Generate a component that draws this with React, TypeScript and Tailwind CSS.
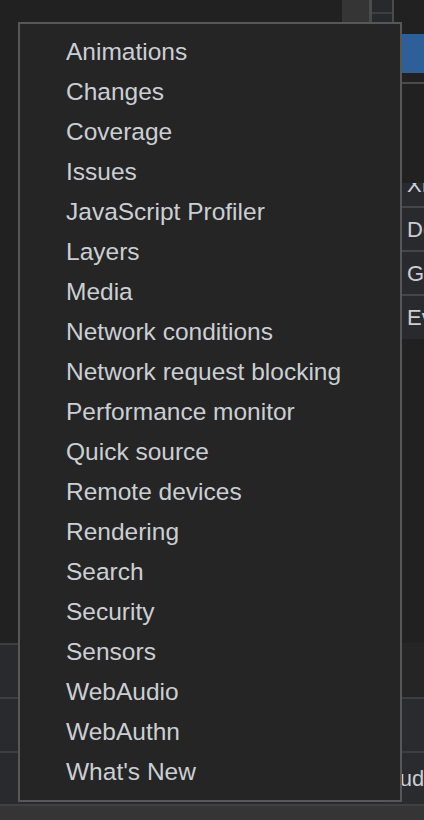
import React from "react";

const items = [
  "Animations",
  "Changes",
  "Coverage",
  "Issues",
  "JavaScript Profiler",
  "Layers",
  "Media",
  "Network conditions",
  "Network request blocking",
  "Performance monitor",
  "Quick source",
  "Remote devices",
  "Rendering",
  "Search",
  "Security",
  "Sensors",
  "WebAudio",
  "WebAuthn",
  "What's New",
];

export default function App() {
  return (
    <div className="relative w-[424px] h-[820px] overflow-hidden bg-[#212121] font-['Liberation_Sans',Arial,sans-serif] text-[#cbcfd4]">
      {/* top strip */}
      <div className="flex h-[34px]">
        <div className="w-[342px] shrink-0" />
        <div className="w-[27px] shrink-0 bg-[#353535]" />
        <div className="w-[3px] shrink-0 bg-[#4b4b4b]" />
        <div className="w-[20px] shrink-0 flex flex-col bg-[#27292d]">
          <div className="h-[12px]" />
          <div className="h-[2px] bg-[#3e3e3e]" />
        </div>
        <div className="w-[2px] shrink-0 bg-[#4b4b4b]" />
      </div>

      {/* main body */}
      <div className="flex h-[609px]">
        <div className="w-[384px] shrink-0" />
        <div className="flex-1 min-w-0 overflow-hidden flex flex-col">
          <div className="h-[39px] bg-[#2d5f99]" />
          <div className="h-[9px]" />
          <div className="h-[2px] bg-[#4a4a4a]" />
          <div className="h-[99px]" />
          <div className="flex flex-col bg-[#292a2e] text-[22px] whitespace-nowrap">
            <div className="h-[23px] overflow-hidden">
              <div className="mt-[-21px] h-[44px] flex items-center pl-[23px]">XHR</div>
            </div>
            <div className="h-[2px] bg-[#44464a]" />
            <div className="h-[42px] flex items-center pl-[23px]">Doc</div>
            <div className="h-[2px] bg-[#44464a]" />
            <div className="h-[42px] flex items-center pl-[23px]">Gen</div>
            <div className="h-[2px] bg-[#44464a]" />
            <div className="h-[43px] flex items-center pl-[23px]">Event</div>
          </div>
          <div className="flex-1" />
        </div>
      </div>

      {/* bottom panel */}
      <div className="flex h-[161px]">
        <div className="w-[384px] shrink-0 flex flex-col">
          <div className="h-[2px] bg-[#3c3e42]" />
          <div className="h-[52px] bg-[#282a2e]" />
          <div className="h-[2px] bg-[#3c3e42]" />
          <div className="h-[52px] bg-[#282a2e]" />
          <div className="h-[2px] bg-[#3c3e42]" />
          <div className="h-[51px] bg-[#282a2e]" />
        </div>
        <div className="flex-1 min-w-0 overflow-hidden flex flex-col text-[22px] whitespace-nowrap">
          <div className="h-[54px] bg-[#252525]" />
          <div className="h-[2px] bg-[#3c3e42]" />
          <div className="h-[52px] bg-[#292b2f]" />
          <div className="h-[2px] bg-[#3c3e42]" />
          <div className="h-[51px] bg-[#292b2f] flex items-center pl-[1px]">Audits</div>
        </div>
      </div>

      {/* bottom strip */}
      <div className="h-[16px] bg-[#353535] border-t-2 border-[#404040]" />

      {/* menu overlay */}
      <div className="absolute left-[18px] top-[22px] w-[384px] h-[780px] border-2 border-[#575757] bg-[#252525] pt-[8px] pl-[46px]">
        {items.map((t) => (
          <div key={t} className="h-[40px] leading-[40px] text-[24.5px] whitespace-nowrap text-[#cbcfd4]">
            {t}
          </div>
        ))}
      </div>
    </div>
  );
}
